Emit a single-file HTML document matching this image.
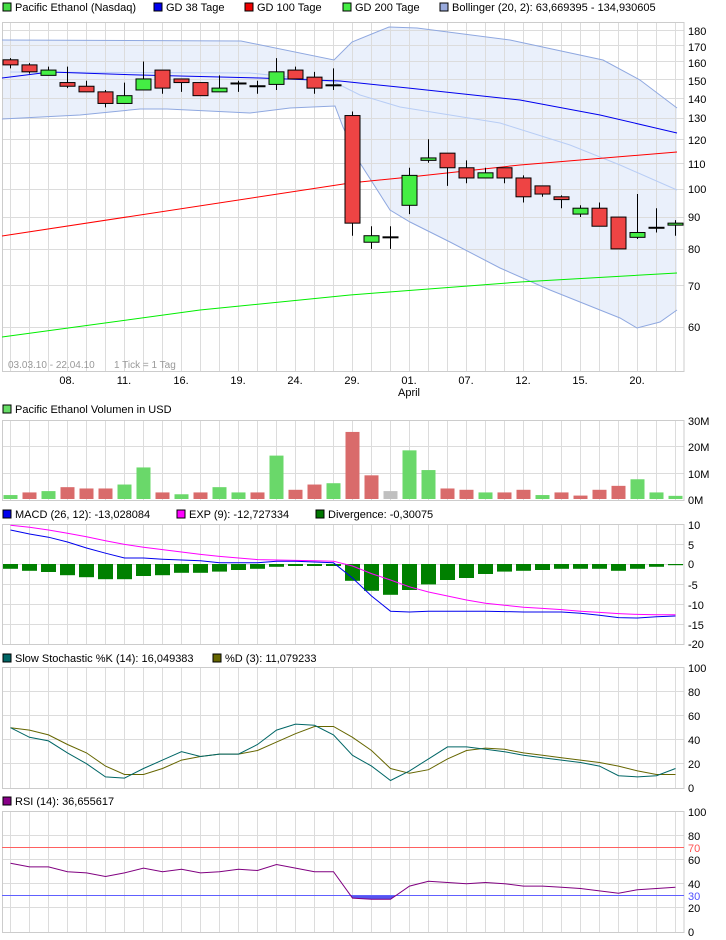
<!DOCTYPE html>
<html><head><meta charset="utf-8"><style>
body{margin:0;background:#fff;width:726px;height:940px;overflow:hidden}
svg{display:block;font-family:"Liberation Sans",Arial,sans-serif;font-size:11px}
</style></head><body>
<svg id="s" width="726" height="940" xmlns="http://www.w3.org/2000/svg">
<g id="g"></g>
<g fill="#000">
<rect x="3" y="3" width="8" height="8" fill="#44dd44" stroke="#000"/><text x="15" y="11">Pacific Ethanol (Nasdaq)</text>
<rect x="154" y="3" width="8" height="8" fill="#0000ee" stroke="#000"/><text x="166" y="11">GD 38 Tage</text>
<rect x="245" y="3" width="8" height="8" fill="#ee0000" stroke="#000"/><text x="257" y="11">GD 100 Tage</text>
<rect x="343" y="3" width="8" height="8" fill="#44ee44" stroke="#000"/><text x="355" y="11">GD 200 Tage</text>
<rect x="440" y="3" width="8" height="8" fill="#99aadd" stroke="#000"/><text x="452" y="11">Bollinger (20, 2): 63,669395 - 134,930605</text>
<text x="8" y="368" fill="#999" font-size="10">03.03.10 - 22.04.10</text><text x="114" y="368" fill="#999" font-size="10">1 Tick = 1 Tag</text>
<g text-anchor="middle"><text x="67" y="384">08.</text><text x="124" y="384">11.</text><text x="181" y="384">16.</text><text x="238" y="384">19.</text><text x="295" y="384">24.</text><text x="352" y="384">29.</text><text x="409" y="384">01.</text><text x="466" y="384">07.</text><text x="523" y="384">12.</text><text x="580" y="384">15.</text><text x="637" y="384">20.</text><text x="409" y="396">April</text></g>
<rect x="3" y="405" width="8" height="8" fill="#66dd66" stroke="#000"/><text x="15" y="413">Pacific Ethanol Volumen in USD</text>
<rect x="3" y="510" width="8" height="8" fill="#0000ee" stroke="#000"/><text x="15" y="518">MACD (26, 12): -13,028084</text>
<rect x="177" y="510" width="8" height="8" fill="#ff00ff" stroke="#000"/><text x="189" y="518">EXP (9): -12,727334</text>
<rect x="316" y="510" width="8" height="8" fill="#007700" stroke="#000"/><text x="328" y="518">Divergence: -0,30075</text>
<rect x="3" y="654" width="8" height="8" fill="#006666" stroke="#000"/><text x="15" y="662">Slow Stochastic %K (14): 16,049383</text>
<rect x="213" y="654" width="8" height="8" fill="#666600" stroke="#000"/><text x="225" y="662">%D (3): 11,079233</text>
<rect x="3" y="797" width="8" height="8" fill="#880088" stroke="#000"/><text x="15" y="805">RSI (14): 36,655617</text>
</g>
<g fill="#000" font-size="11">
<text x="688" y="35">180</text><text x="688" y="51">170</text><text x="688" y="67">160</text><text x="688" y="85">150</text><text x="688" y="103">140</text><text x="688" y="122">130</text><text x="688" y="144">120</text><text x="688" y="168">110</text><text x="688" y="193">100</text><text x="688" y="221">90</text><text x="688" y="253">80</text><text x="688" y="290">70</text><text x="688" y="331">60</text>
<text x="688" y="425">30M</text><text x="688" y="451">20M</text><text x="688" y="478">10M</text><text x="688" y="504">0M</text>
<text x="688" y="529">10</text><text x="688" y="549">5</text><text x="688" y="568">0</text><text x="688" y="589">-5</text><text x="688" y="609">-10</text><text x="688" y="629">-15</text><text x="688" y="648">-20</text>
<text x="688" y="672">100</text><text x="688" y="696">80</text><text x="688" y="720">60</text><text x="688" y="744">40</text><text x="688" y="768">20</text><text x="688" y="792">0</text>
<text x="688" y="816">100</text><text x="688" y="840">80</text><text x="688" y="852" fill="#ff5050">70</text><text x="688" y="864">60</text><text x="688" y="888">40</text><text x="688" y="900" fill="#5050ff">30</text><text x="688" y="912">20</text><text x="688" y="936">0</text>
</g>
</svg>
<script>
var g=document.getElementById('g'),h='';
function X(i){return 10.5+19*i}
function pl(pts,c,w){h+='<polyline fill="none" stroke="'+c+'" stroke-width="'+(w||1)+'" points="'+pts.map(function(p){return p.join(',')}).join(' ')+'"/>'}
function L(x1,y1,x2,y2,c){h+='<line x1="'+x1+'" y1="'+y1+'" x2="'+x2+'" y2="'+y2+'" stroke="'+c+'"/>'}
function R(x,y,w,hh,f,s){h+='<rect x="'+x+'" y="'+y+'" width="'+w+'" height="'+hh+'" fill="'+f+'"'+(s?' stroke="'+s+'"':'')+'/>'}
function PY(p){return 326.7-270.4*Math.log(p/60)}
var G='#dcdcdc';
function panel(t,b,hl){for(var i=0;i<36;i++)L(X(i),t,X(i),b,G);hl.forEach(function(y){L(2,y,684,y,G)});h+='<rect x="2.5" y="'+t+'.5" width="681.5" height="'+(b-t)+'" fill="none" stroke="#ccc"/>'}
var up=[[2,40],[241,41],[334,60],[352,42],[389,27],[417,28],[510,40],[603,60],[640,80],[677,108]];
var lo=[[2,119],[80,115],[140,109],[167,109],[250,113],[290,108],[335,106],[343,127],[360,163],[390,210],[410,222],[450,242],[500,268],[550,290],[600,310],[620,318],[637,328],[660,322],[677,310]];
var poly=up.concat(lo.slice().reverse());
h+='<polygon fill="#eaf0fb" points="'+poly.map(function(p){return p.join(',')}).join(' ')+'"/>';
var hl=[];for(var p=60;p<=180;p+=10)hl.push(Math.round(PY(p))+.5);
panel(22,371,hl);
pl(up,'#8fa8e0');pl(lo,'#8fa8e0');
pl([[10,72],[250,73],[334,82],[360,95],[400,107],[500,123],[570,145],[620,165],[677,190]],'#b8cdf5');
pl([[2,236],[350,183],[410,177],[520,165],[677,152]],'#ff0000');
pl([[2,337],[200,310],[350,295],[520,282],[677,273]],'#00ee00');
pl([[2,78],[50,72],[140,75],[260,78],[340,81],[408,88],[520,100],[600,115],[677,133]],'#0000ee');
var C=[[161,162,156,158],[158,159,153,154],[152,157,152,155],[148,157,145,146],[146,149,143,143],[143,144,135,137],[137,148,137,141],[144,160,144,150],[155,155,142,145],[150,150,143,148],[148,148,141,141],[143,152,143,145],[147.5,149,143,147.5],[146,149,142,146],[147,162,144,154],[155,157,150,150],[151,154,142,145],[146.5,156,144,146.5],[131,133,84,88],[82,87,80,84],[83.5,87,80,83.5],[94,108,91,105],[111,120,110,112],[114,114,101,108],[108,111,102,104],[104,108,104,106],[108,108,102,104],[104,105,95,97],[101,101,97,98],[97,97.5,93,96],[91,94,90,93],[93,95,87,87],[90,90,80,80],[83.5,98,83,85],[86.5,93,85,86.5],[87.5,89,84,88]];
C.forEach(function(c,i){var x=X(i);L(x,PY(c[1]),x,PY(c[2]),'#000');
if(c[0]==c[3]){h+='<line x1="'+(x-8)+'" y1="'+PY(c[0])+'" x2="'+(x+8)+'" y2="'+PY(c[0])+'" stroke="#000" stroke-width="2"/>';}
else{var t=PY(Math.max(c[0],c[3])),b=PY(Math.min(c[0],c[3]));R(x-7.5,t,15,Math.max(b-t,2),c[3]>c[0]?'#44ee44':'#ee4444','#000');}});
panel(420,500,[420.5,446.5,473.5]);
var V=[1.5,2.5,3,4.5,4,4,5.5,12,2.5,1.8,2.5,4.5,2.5,2.5,16.5,3.5,5.5,6,25.5,9,3,18.5,11,4,3.5,2.5,2.5,3.5,1.5,2.5,1.3,3.5,5,7.5,2.5,1.2];
var VC='grgrrrggrgrggrgrrgrrxggrrgrrgrrrrggg';
V.forEach(function(v,i){var hh=v*2.63;R(X(i)-7,499-hh,14,hh,VC[i]=='g'?'#6ad86a':VC[i]=='r'?'#d96b6b':'#c0c0c0')});
function MY(v){return 564-4*v}
panel(524,644,[524.5,544.5,564.5,584.5,604.5,624.5]);
var D=[-1.2,-1.7,-2,-2.8,-3.3,-3.8,-3.8,-3,-2.8,-2.2,-2.2,-1.9,-1.5,-1.2,-0.7,-0.5,-0.5,-0.5,-4.2,-6.7,-7.7,-6.5,-5.1,-4,-3.5,-2.5,-1.9,-1.7,-1.5,-1.2,-1.2,-1.2,-1.7,-1.2,-0.7,-0.3];
D.forEach(function(v,i){R(X(i)-7.5,564,15,-v*4,'#008000')});
var M=[8.5,7.5,6.7,5.5,4,2.7,1.5,1.5,1.2,1,0.8,0.3,0.3,0.3,0.7,0.7,0.5,0.3,-3.5,-8,-11.8,-12,-11.8,-11.8,-11.8,-11.8,-11.9,-12,-12,-12,-12.3,-12.8,-13.4,-13.5,-13.2,-13];
var E=[9.7,9.2,8.5,7.7,6.8,5.8,4.9,4.2,3.6,3,2.4,1.9,1.5,1.1,1,0.9,0.8,0.7,-0.5,-2.4,-4,-5.7,-7,-8,-9,-9.8,-10.3,-10.8,-11.1,-11.4,-11.8,-12.1,-12.4,-12.6,-12.7,-12.7];
pl(E.map(function(v,i){return[X(i),MY(v)]}),'#ff00ff');
pl(M.map(function(v,i){return[X(i),MY(v)]}),'#0000ee');
function SY(v){return 787.7-1.2*v}
panel(667,788,[667.5,691.5,715.5,739.5,763.5]);
var K=[50,42,39,29,20,9,8,16,23,30,26,28,28,36,48,53,52,44,27,18,6,14,24,34,34,32,30,27,25,23,21,18,10,9,10,16];
var DD=[50,48,44,36,29,18,11,11,16,23,26,28,28,31,38,45,51,51,42,31,16,12,15,24,31,33,32,29,27,25,23,21,18,14,11,11];
pl(DD.map(function(v,i){return[X(i),SY(v)]}),'#666600');
pl(K.map(function(v,i){return[X(i),SY(v)]}),'#006666');
function RY(v){return 931.7-1.2*v}
panel(811,932,[811.5,835.5,859.5,883.5,907.5]);
L(2,847.5,684,847.5,'#ff6060');
var RS=[57,54,54,50,49,46,49,53,50,52,49,50,52,51,56,53,50,50,28,27,27,38,42,41,40,41,40,38,38,37,36,34,32,35,36,37];
h+='<polygon fill="#5555ee" points="'+X(17.9)+','+RY(30)+' '+X(18)+','+RY(28)+' '+X(19)+','+RY(27)+' '+X(20)+','+RY(27)+' '+X(20.3)+','+RY(30)+'"/>';
L(2,895.5,684,895.5,'#6060ff');
pl(RS.map(function(v,i){return[X(i),RY(v)]}),'#800080');
g.innerHTML=h;
</script>
</body></html>
